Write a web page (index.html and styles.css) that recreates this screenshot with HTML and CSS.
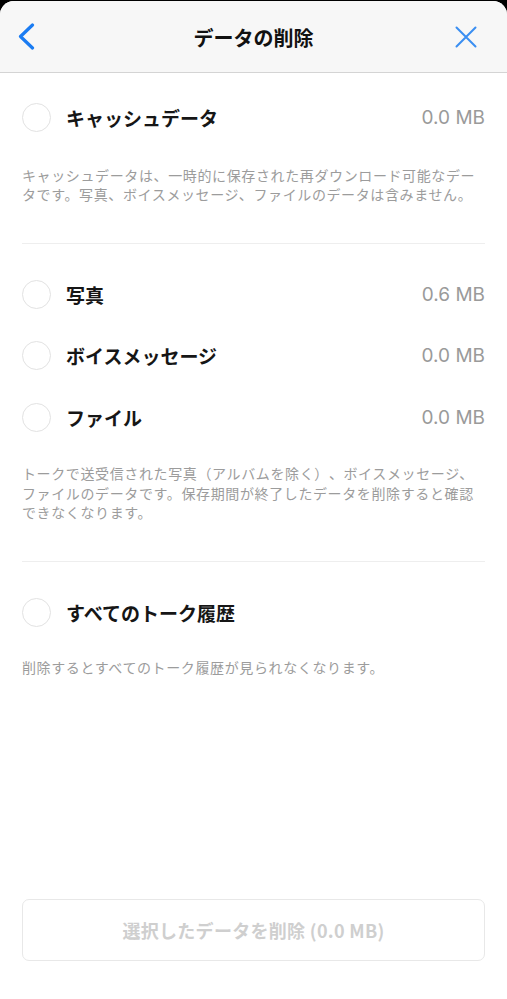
FILE: index.html
```html
<!DOCTYPE html>
<html lang="ja">
<head>
<meta charset="utf-8">
<title>データの削除</title>
<link rel="stylesheet" href="styles.css">
</head>
<body>
<div class="sheet">
  <header class="header">
    <svg class="back" width="18" height="28" viewBox="0 0 18 28"><path d="M14.5 2 L2.5 13.5 L14.5 25" fill="none" stroke="#1b7cf2" stroke-width="3.2" stroke-linecap="round" stroke-linejoin="round"/></svg>
    <h1 class="title">データの削除</h1>
    <svg class="close" width="22" height="22" viewBox="0 0 22 22"><path d="M1.5 1.5 L20.5 20.5 M20.5 1.5 L1.5 20.5" fill="none" stroke="#3a8ef2" stroke-width="2" stroke-linecap="round"/></svg>
  </header>
  <main class="content">
    <section class="group first">
      <div class="row"><span class="radio"></span><span class="label">キャッシュデータ</span><span class="size">0.0 MB</span></div>
      <p class="desc desc-first">キャッシュデータは、一時的に保存された再ダウンロード可能なデータです。写真、ボイスメッセージ、ファイルのデータは含みません。</p>
    </section>
    <hr class="divider">
    <section class="group">
      <div class="row"><span class="radio"></span><span class="label">写真</span><span class="size">0.6 MB</span></div>
      <div class="row"><span class="radio"></span><span class="label">ボイスメッセージ</span><span class="size">0.0 MB</span></div>
      <div class="row"><span class="radio"></span><span class="label">ファイル</span><span class="size">0.0 MB</span></div>
      <p class="desc">トークで送受信された写真（アルバムを除く）、ボイスメッセージ、ファイルのデータです。保存期間が終了したデータを削除すると確認できなくなります。</p>
    </section>
    <hr class="divider">
    <section class="group">
      <div class="row"><span class="radio"></span><span class="label">すべてのトーク履歴</span></div>
      <p class="desc desc-last">削除するとすべてのトーク履歴が見られなくなります。</p>
    </section>
  </main>
  <footer class="footer">
    <button class="delete" disabled>選択したデータを削除 (0.0 MB)</button>
  </footer>
</div>
</body>
</html>
```

FILE: styles.css
```css
* { box-sizing: border-box; }
html, body { margin: 0; padding: 0; }
body {
  background: #000;
  font-family: Inter, "Noto Sans CJK JP", sans-serif;
  text-spacing-trim: space-all;
}
.sheet {
  margin-top: 1px;
  min-height: 998px;
  background: #fff;
  border-radius: 14px 14px 0 0;
  display: flex;
  flex-direction: column;
  overflow: hidden;
}
.header {
  height: 72px;
  background: #f7f7f7;
  border-bottom: 1px solid #d4d4d4;
  display: grid;
  grid-template-columns: 80px 1fr 80px;
  align-items: center;
}
.back { margin-left: 18px; margin-top: 1px; }
.close { justify-self: end; margin-right: 30px; margin-top: 0; }
.title {
  margin: 0;
  text-align: center;
  font-family: "Noto Sans CJK JP", sans-serif;
  font-size: 20px;
  font-weight: 700;
  color: #111;
  margin-top: 1px;
}
.content { padding: 0 22px; }
.group.first { padding-top: 14px; }
.group { padding-top: 20px; }
.row {
  height: 61.5px;
  display: flex;
  align-items: center;
}
.radio {
  width: 29px;
  height: 29px;
  border-radius: 50%;
  border: 1.5px solid #e2e2e2;
  flex: none;
}
.label {
  margin-left: 15px;
  font-family: "Noto Sans CJK JP", sans-serif;
  font-size: 19px;
  font-weight: 700;
  color: #161616;
  flex: 1;
}
.size {
  font-family: Inter, sans-serif;
  font-size: 19px;
  color: #9a9a9a;
}
.desc {
  margin: 16px 0 0;
  font-family: "Noto Sans CJK JP", sans-serif;
  font-size: 14px;
  letter-spacing: 0.62px;
  line-height: 19.5px;
  color: #9c9c9c;
  text-spacing-trim: space-all;
}
.desc-first { margin-top: 17px; }
.desc-last { margin-top: 15px; }
.divider {
  margin: 38px 0 0;
  border: 0;
  border-top: 1px solid #eeeeee;
  height: 0;
}
.footer {
  margin-top: auto;
  padding: 0 22px 38px;
}
.delete {
  width: 100%;
  height: 62px;
  background: #fff;
  border: 1px solid #e8e8e8;
  border-radius: 7px;
  font-family: "Noto Sans CJK JP", sans-serif;
  font-size: 18px;
  font-weight: 700;
  letter-spacing: 0.3px;
  color: #cfcfcf;
}
```
